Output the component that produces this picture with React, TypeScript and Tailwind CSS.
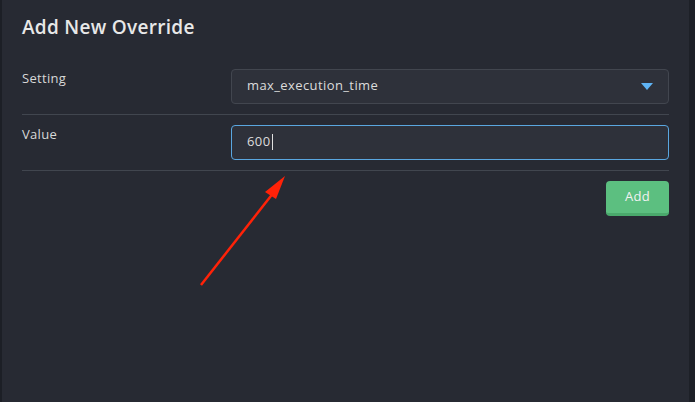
import React from "react";

export default function App() {
  return (
    <div className="flex h-[402px] w-[695px] overflow-hidden bg-[#1e2129]" style={{ fontFamily: '"Open Sans", "Noto Sans", sans-serif' }}>
      <div className="w-[2px] shrink-0 bg-[#1c1f26]" />
      <div className="relative flex-1 bg-[#272a33] pl-[20px] pr-[20px]">
        <h1 className="pt-[13px] text-[19px] font-semibold tracking-[0.3px] text-[#e8e8e8]">Add New Override</h1>
        <div className="mt-[27px] flex border-b border-[#41464f] pb-[10px]">
          <div className="w-[209px] text-[13px] tracking-[0.3px] text-[#d8d8d8]">Setting</div>
          <div className="flex h-[35px] flex-1 items-center justify-between rounded-[4px] border border-[#42464f] bg-[#2e313a] pl-[15px] pr-[15px]">
            <span className="text-[13px] tracking-[0.4px] text-[#dcdcdc]">max_execution_time</span>
            <svg width="12" height="7" viewBox="0 0 12 7"><path d="M0 0 H12 L6 7 Z" fill="#5fb4f5" /></svg>
          </div>
        </div>
        <div className="mt-[10px] flex border-b border-[#41464f] pb-[10px]">
          <div className="w-[209px] text-[13px] tracking-[0.3px] text-[#d8d8d8]">Value</div>
          <div className="flex h-[35px] flex-1 items-center rounded-[4px] border border-[#5aa7e0] bg-[#2e313a] pl-[15px]">
            <span className="text-[13px] tracking-[0.4px] text-[#dcdcdc]">600</span>
            <span className="ml-[1px] h-[16px] w-[1px] bg-[#e0e0e0]" />
          </div>
        </div>
        <div className="mt-[10px] flex justify-end">
          <button className="h-[35px] w-[63px] rounded-[4px] border-b-[3px] border-[#4aa96c] bg-[#5cbf80] text-[13px] tracking-[0.3px] text-[#f2f2f2]">Add</button>
        </div>
        <svg className="absolute left-0 top-0" width="695" height="402" viewBox="0 0 695 402">
          <line x1="199" y1="285" x2="272" y2="192" stroke="#ff2208" strokeWidth="2.5" />
          <path d="M283 176 L263 192 L274 199 Z" fill="#ff2208" />
        </svg>
      </div>
      <div className="w-[6px] shrink-0 bg-[#1d2027]" />
    </div>
  );
}
